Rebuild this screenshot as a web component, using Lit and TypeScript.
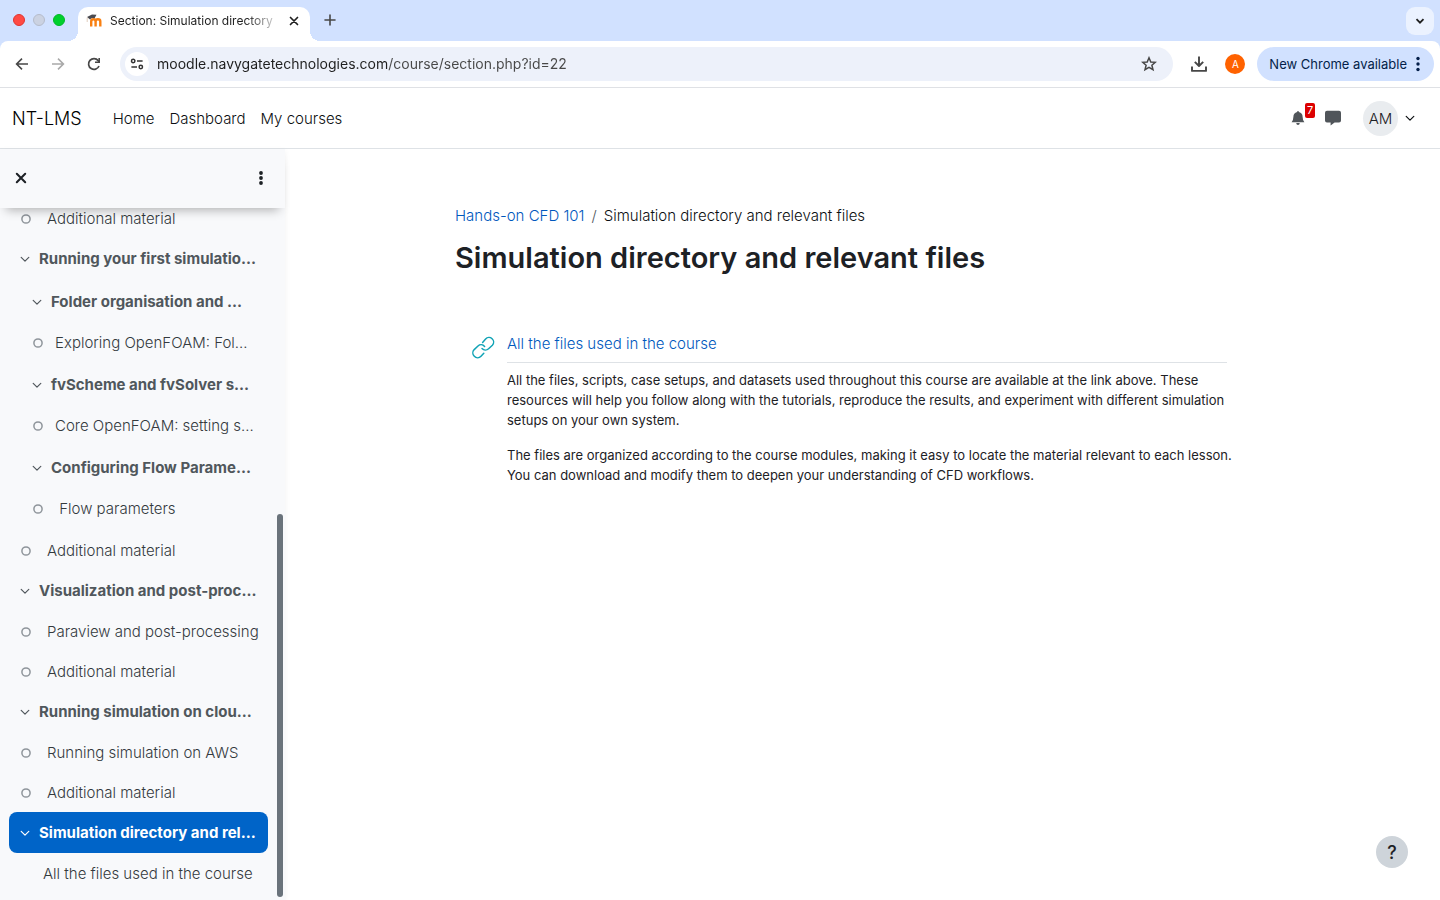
import { LitElement, html, svg, css, nothing } from "lit";
import { customElement } from "lit/decorators.js";
import { classMap } from "lit/directives/class-map.js";

const shared = css`
  * { box-sizing: border-box; }
  :host { font-family: Inter, "Liberation Sans", sans-serif; }
  button { font: inherit; color: inherit; border: 0; padding: 0; background: none; display: flex; align-items: center; justify-content: center; cursor: pointer; }
  a { color: inherit; text-decoration: none; }
  svg { display: block; flex: none; }
`;

const icon = (size: number, body: unknown, box = size) =>
  html`<svg width=${size} height=${size} viewBox="0 0 ${box} ${box}" aria-hidden="true">${body}</svg>`;

const chevron = icon(10, svg`<path d="M1.2 3.3 L5 7.1 L8.8 3.3" fill="none" stroke="currentColor" stroke-width="1.2" stroke-linecap="round" stroke-linejoin="round"/>`);
const cross = (size: number) =>
  icon(size, svg`<path d="M1.5 1.5 L8.5 8.5 M8.5 1.5 L1.5 8.5" stroke="currentColor" stroke-width="1.7" stroke-linecap="round"/>`, 10);

@customElement("browser-bar")
class BrowserBar extends LitElement {
  static styles = [shared, css`
    :host { display: block; background: #d1e1ff; color: #1f1f1f; }
    .tabs { display: flex; height: 41px; padding: 7px 6px 0 13px; }
    .lights { display: flex; gap: 8px; padding-top: 7px; width: 65px; flex: none; }
    .light { width: 12px; height: 12px; border-radius: 50%; border: 1px solid #e0342f; background: #ff4a44; }
    .light.min { background: #cbd2e2; border-color: #b5bccb; }
    .light.max { background: #00d02c; border-color: #00b826; }
    .tab { position: relative; width: 232px; height: 34px; background: #fff; border-radius: 10px 10px 0 0; display: flex; align-items: center; padding: 0 9px 7px 8px; }
    .tab::before, .tab::after { content: ""; position: absolute; bottom: 0; width: 10px; height: 10px; }
    .tab::before { left: -10px; background: radial-gradient(circle at 0 0, transparent 10px, #fff 10px); }
    .tab::after { right: -10px; background: radial-gradient(circle at 100% 0, transparent 10px, #fff 10px); }
    .title { flex: 1; margin: 0 10px 0 7px; font-size: 12px; line-height: 16px; white-space: nowrap; -webkit-mask-image: linear-gradient(to right, #000 136px, transparent 172px); mask-image: linear-gradient(to right, #000 136px, transparent 172px); }
    .close { width: 14px; height: 14px; }
    .new { width: 28px; height: 26px; margin: 0 auto 0 6px; color: #474747; }
    .search { width: 28px; height: 28px; border-radius: 9px; background: #ebf2ff; }
    .tools { display: flex; align-items: center; height: 47px; padding: 0 6px 0 14px; background: #fff; border-radius: 8px 8px 0 0; border-bottom: 1px solid #dfe1e5; color: #474747; }
    .nav { width: 16px; height: 34px; margin-right: 20px; }
    .nav.off { color: #a9a9a9; }
    .nav.reload { margin-right: 18px; }
    .address { flex: 1; height: 34px; border-radius: 17px; background: #edf1fa; display: flex; align-items: center; padding: 0 16px 0 5px; }
    .site { width: 24px; height: 24px; border-radius: 50%; background: #fff; }
    .url { flex: 1; min-width: 0; margin: 0 8px; padding: 0; border: 0; outline: 0; font: 14px/20px Inter, "Liberation Sans", sans-serif; color: #1f1f1f; background: linear-gradient(to right, #1f1f1f 230px, #474747 230px); background-clip: text; -webkit-background-clip: text; -webkit-text-fill-color: transparent; }
    .down { margin: 0 17px 0 17px; }
    .profile { width: 20px; height: 20px; border-radius: 50%; background: #ff6200; color: #fff; font-size: 10px; margin-right: 12px; }
    .update { height: 34px; border-radius: 17px; background: #d1e1ff; color: #041e49; padding: 0 8px 0 12px; font-size: 13px; gap: 3px; white-space: nowrap; }
  `];
  render() {
    return html`
      <div class="tabs">
        <div class="lights"><span class="light"></span><span class="light min"></span><span class="light max"></span></div>
        <div class="tab">
          ${icon(17, svg`
            <path d="M5.2 14.6 V9.4 Q5.2 7.3 7.4 7.3 Q9.6 7.3 9.6 9.4 V14.6 M9.6 14.6 V9.4 Q9.6 7.3 11.9 7.3 Q14.3 7.3 14.3 9.4 V14.6" fill="none" stroke="#f98012" stroke-width="2.4"/>
            <path d="M1 5 L6 2.4 L10.5 2.8 L8.6 6.2 Q5.6 5.4 4 7.4 Z" fill="#4a4a50"/>
            <path d="M1.2 5.6 V10" stroke="#e0cdbd" stroke-width="1"/>`)}
          <span class="title">Section: Simulation directory</span>
          <button class="close" aria-label="Close tab">${cross(10)}</button>
        </div>
        <button class="new" aria-label="New tab">${icon(12, svg`<path d="M6 1 V11 M1 6 H11" stroke="currentColor" stroke-width="1.6" stroke-linecap="round"/>`)}</button>
        <button class="search" aria-label="Search tabs">${icon(10, svg`<path d="M1.5 3.2 L5 6.7 L8.5 3.2" fill="none" stroke="#1f1f1f" stroke-width="1.8"/>`)}</button>
      </div>
      <div class="tools">
        <button class="nav" aria-label="Back">${icon(16, svg`<path d="M14 8 H3 M8 2.6 L2.6 8 L8 13.4" fill="none" stroke="currentColor" stroke-width="1.6"/>`)}</button>
        <button class="nav off" aria-label="Forward">${icon(16, svg`<path d="M2 8 H13 M8 2.6 L13.4 8 L8 13.4" fill="none" stroke="currentColor" stroke-width="1.6"/>`)}</button>
        <button class="nav reload" aria-label="Reload">${icon(16, svg`<path d="M13 10 A5.4 5.4 0 1 1 12.2 4.6 L13.4 6" fill="none" stroke="currentColor" stroke-width="1.7"/><path d="M13.2 2 V6.2 H9" fill="none" stroke="currentColor" stroke-width="1.6"/>`)}</button>
        <div class="address">
          <button class="site" aria-label="Site information">${icon(14, svg`<g fill="none" stroke="#333" stroke-width="1.5"><circle cx="3.2" cy="4" r="1.7"/><path d="M7 4 H12.6"/><circle cx="10.8" cy="10" r="1.7"/><path d="M1.4 10 H7"/></g>`)}</button>
          <input class="url" type="text" aria-label="Address" value="moodle.navygatetechnologies.com/course/section.php?id=22">
          <button aria-label="Bookmark">${icon(16, svg`<path d="M8 1.8 L9.8 6 L14.3 6.3 L10.9 9.2 L12 13.7 L8 11.3 L4 13.7 L5.1 9.2 L1.7 6.3 L6.2 6 Z" fill="none" stroke="currentColor" stroke-width="1.5"/>`)}</button>
        </div>
        <button class="down" aria-label="Downloads">${icon(18, svg`<path d="M9 1.4 V10.5 M4.8 6.8 L9 11 L13.2 6.8 M2 11.6 V15.9 H16 V11.6" fill="none" stroke="currentColor" stroke-width="1.9" stroke-linejoin="round"/>`)}</button>
        <button class="profile">A</button>
        <button class="update">New Chrome available ${icon(16, svg`<g fill="currentColor"><circle cx="8" cy="2.5" r="1.7"/><circle cx="8" cy="8" r="1.7"/><circle cx="8" cy="13.5" r="1.7"/></g>`)}</button>
      </div>`;
  }
}

@customElement("site-header")
class SiteHeader extends LitElement {
  static styles = [shared, css`
    :host { display: flex; align-items: center; height: 61px; padding: 0 25px 0 12px; border-bottom: 1px solid #dee2e6; background: #fff; color: #0c0f12; font-size: 15px; font-weight: 300; }
    .brand { font-size: 18px; color: #000; margin-right: 31px; }
    nav { display: flex; gap: 15px; flex: 1; }
    .tool { position: relative; color: #50555a; width: 16px; height: 36px; }
    .bell { margin-right: 19px; }
    .count { position: absolute; left: 15px; top: 3px; width: 10px; height: 15px; border-radius: 2px; background: #dc0000; color: #fff; font-size: 11px; line-height: 15px; text-align: center; font-weight: 400; }
    .user { gap: 7px; margin-left: 22px; }
    .initials { width: 35px; height: 35px; border-radius: 50%; background: #e9ecef; color: #1d2125; display: flex; align-items: center; justify-content: center; }
  `];
  render() {
    return html`
      <a class="brand" href="#">NT-LMS</a>
      <nav><a href="#">Home</a><a href="#">Dashboard</a><a href="#">My courses</a></nav>
      <button class="tool bell" aria-label="Notifications">
        ${icon(16, svg`<path d="M8 1 Q8.9 1 8.9 2 Q12.6 2.9 12.6 6.8 Q12.6 10 14.4 12.2 H1.6 Q3.4 10 3.4 6.8 Q3.4 2.9 7.1 2 Q7.1 1 8 1 Z M6.2 13 H9.8 Q9.6 15 8 15 Q6.4 15 6.2 13 Z" fill="currentColor"/>`)}
        <span class="count">7</span>
      </button>
      <button class="tool" aria-label="Messages">${icon(16, svg`<path d="M2 0.8 H14 Q16 0.8 16 2.8 V10.6 Q16 12.6 14 12.6 H9.6 L5.6 15.4 V12.6 H2 Q0 12.6 0 10.6 V2.8 Q0 0.8 2 0.8 Z" fill="currentColor"/>`)}</button>
      <button class="user"><span class="initials">AM</span>${chevron}</button>`;
  }
}

interface Entry { label: string; kind: "head" | "item" | "plain"; nested?: boolean; active?: boolean; gap?: boolean; }

const entries: Entry[] = [
  { label: "Additional material", kind: "item" },
  { label: "Running your first simulatio...", kind: "head" },
  { label: "Folder organisation and ...", kind: "head", nested: true, gap: true },
  { label: "Exploring OpenFOAM: Fol...", kind: "item", nested: true },
  { label: "fvScheme and fvSolver s...", kind: "head", nested: true, gap: true },
  { label: "Core OpenFOAM: setting s...", kind: "item", nested: true },
  { label: "Configuring Flow Parame...", kind: "head", nested: true, gap: true },
  { label: "\u00a0Flow parameters", kind: "item", nested: true },
  { label: "Additional material", kind: "item", gap: true },
  { label: "Visualization and post-proc...", kind: "head" },
  { label: "Paraview and post-processing", kind: "item" },
  { label: "Additional material", kind: "item" },
  { label: "Running simulation on clou...", kind: "head" },
  { label: "Running simulation on AWS", kind: "item" },
  { label: "Additional material", kind: "item" },
  { label: "Simulation directory and rel...", kind: "head", active: true },
  { label: "All the files used in the course", kind: "plain" },
];

@customElement("course-index")
class CourseIndex extends LitElement {
  static styles = [shared, css`
    :host { display: flex; flex-direction: column; width: 285px; flex: none; min-height: 0; background: #f8f9fb; color: #343a3e; font-size: 15px; font-weight: 300; box-shadow: 0 2px 6px rgba(0, 0, 0, 0.06); }
    .top { position: relative; display: flex; align-items: center; justify-content: space-between; flex: none; height: 59px; padding: 0 17px 2px 14px; background: #f8f9fb; color: #1d2125; box-shadow: 0 8px 10px -6px rgba(0, 0, 0, 0.3); }
    .top button { width: 14px; height: 30px; }
    .body { display: flex; flex: 1; min-height: 0; }
    ul { display: flex; flex-direction: column; justify-content: flex-end; flex: 1; min-width: 0; overflow: hidden; list-style: none; margin: 0; padding: 0 9px 7px; }
    li { display: flex; align-items: center; flex: none; height: 40px; padding-left: 12px; border-radius: 8px; white-space: nowrap; }
    li.head { height: 41px; padding-left: 11px; font-weight: 650; color: #50575c; }
    li.head a { margin-left: 9px; }
    li.item a { margin-left: 16px; }
    li.plain { padding-left: 34px; }
    li.nested { padding-left: 24px; }
    li.head.nested { padding-left: 23px; }
    li.item.nested a { margin-left: 12px; }
    li.gap { margin-top: 2px; }
    li.head.active { background: #0064c8; color: #fff; }
    .dot { color: #8f959b; padding-top: 2px; }
    .track { display: flex; flex-direction: column; justify-content: flex-end; width: 8px; padding: 0 2px 3px 0; }
    .thumb { height: calc(100% * 5 / 9); border-radius: 3px; background: #6a737b; }
  `];
  render() {
    return html`
      <div class="top">
        <button aria-label="Close course index">${cross(12)}</button>
        <button aria-label="Options">${icon(14, svg`<g fill="currentColor"><circle cx="7" cy="2" r="1.9"/><circle cx="7" cy="7" r="1.9"/><circle cx="7" cy="12" r="1.9"/></g>`)}</button>
      </div>
      <div class="body">
        <ul>
          ${entries.map((e) => html`
            <li class=${classMap({ [e.kind]: true, nested: !!e.nested, active: !!e.active, gap: !!e.gap })}>
              ${e.kind === "head"
                ? html`<button aria-label="Toggle section">${chevron}</button>`
                : e.kind === "item"
                ? html`<span class="dot">${icon(10, svg`<circle cx="5" cy="5" r="4.1" fill="none" stroke="currentColor" stroke-width="1.5"/>`)}</span>`
                : nothing}
              <a href="#">${e.label}</a>
            </li>`)}
        </ul>
        <div class="track"><div class="thumb"></div></div>
      </div>`;
  }
}

@customElement("app-root")
class AppRoot extends LitElement {
  static styles = [shared, css`
    :host { display: flex; flex-direction: column; height: 100vh; background: #fff; color: #1d2125; font-size: 15px; overflow: hidden; }
    .page { display: flex; flex: 1; min-height: 0; }
    main { flex: 1; min-width: 0; padding: 55px 43px 0 0; }
    .content { max-width: 772px; margin: 0 auto; }
    .crumbs { display: flex; gap: 7px; line-height: 24px; font-weight: 300; color: #0c0f12; }
    .crumbs a, .name { color: #0058bd; }
    .slash { color: #50575c; }
    h1 { margin: 12px 0 0; font-size: 29px; line-height: 36px; font-weight: 600; }
    .activity { display: flex; gap: 12px; padding-left: 16px; margin-top: 56px; }
    .glyph { padding-top: 3px; color: #11a3b5; }
    .info { flex: 1; min-width: 0; }
    .name { display: block; line-height: 24px; padding-bottom: 6px; border-bottom: 1px solid #dee2e6; font-weight: 300; }
    .text { font-size: 13px; line-height: 20px; padding-top: 7px; margin-right: -8px; }
    p { margin: 0 0 15px; }
    .help { position: fixed; right: 32px; bottom: 32px; width: 32px; height: 32px; border-radius: 50%; background: #ced4da; color: #1d2125; font-size: 18px; font-weight: 500; }
  `];
  render() {
    return html`
      <browser-bar></browser-bar>
      <site-header></site-header>
      <div class="page">
        <course-index></course-index>
        <main>
          <div class="content">
            <nav class="crumbs"><a href="#">Hands-on CFD 101</a><span class="slash">/</span><span>Simulation directory and relevant files</span></nav>
            <h1>Simulation directory and relevant files</h1>
            <section class="activity">
              <div class="glyph">${icon(24, svg`<g fill="none" stroke="currentColor" stroke-width="1.5" stroke-linecap="round" stroke-linejoin="round"><path d="M11.6 7.4 L14.6 4 A4.6 4.6 0 0 1 21.4 10.2 L17.6 13.8 A4.7 4.7 0 0 1 11 13.6"/><path d="M13.6 11.4 A4.7 4.7 0 0 0 7 11 L3.2 14.6 A4.7 4.7 0 0 0 10 21.2 L12.8 18.2"/></g>`)}</div>
              <div class="info">
                <a class="name" href="#">All the files used in the course</a>
                <div class="text">
                  <p>All the files, scripts, case setups, and datasets used throughout this course are available at the link above. These resources will help you follow along with the tutorials, reproduce the results, and experiment with different simulation setups on your own system.</p>
                  <p>The files are organized according to the course modules, making it easy to locate the material relevant to each lesson. You can download and modify them to deepen your understanding of CFD workflows.</p>
                </div>
              </div>
            </section>
          </div>
        </main>
      </div>
      <button class="help" aria-label="Help">?</button>`;
  }
}
